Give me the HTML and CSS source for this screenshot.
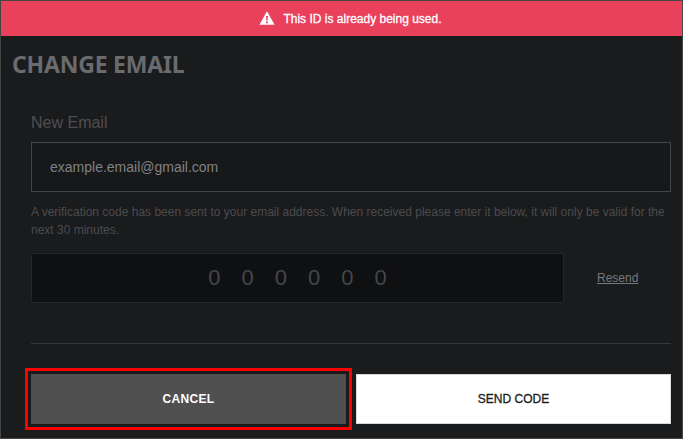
FILE: index.html
```html
<!DOCTYPE html>
<html>
<head>
    <link rel="stylesheet" href="styles.css">
</head>
<body>
    <div class="modal">
        <div class="alert">
            <svg class="alert-icon" viewBox="0 0 16 14" width="16" height="14">
                <path fill="#fff" fill-rule="evenodd" d="M8 0.3 15.6 13.7H0.4ZM7.1 4.9 7.4 9.8H8.6L8.9 4.9ZM7.1 10.6V12.2H8.9V10.6Z"/>
            </svg>
            <span>This ID is already being used.</span>
        </div>

        <h2 class="title">CHANGE EMAIL</h2>

        <div class="form">
            <label class="label">New Email</label>
            <div class="email-field">example.email@gmail.com</div>
            <p class="hint">A verification code has been sent to your email address. When received please enter it below, it will only be valid for the next 30 minutes.</p>

            <div class="code-row">
                <div class="code-field">
                    <span>0</span><span>0</span><span>0</span><span>0</span><span>0</span><span>0</span>
                </div>
                <a class="resend">Resend</a>
            </div>

            <div class="divider"></div>

            <div class="actions">
                <button class="btn btn-cancel">CANCEL</button>
                <button class="btn btn-send">SEND CODE</button>
            </div>
        </div>
    </div>
</body>
</html>
```

FILE: styles.css
```css
html, body {
    margin: 0;
    padding: 0;
}
body {
    width: 683px;
    height: 439px;
    overflow: hidden;
    font-family: "Liberation Sans", Arial, sans-serif;
    background-color: #1a1b1d;
}
.modal {
    box-sizing: border-box;
    width: 683px;
    height: 439px;
    border: 1px solid #444444;
    background-color: #1a1b1d;
}
.alert {
    height: 35px;
    display: flex;
    align-items: center;
    justify-content: center;
    gap: 8px;
    padding-left: 18px;
    background-color: #e9415c;
    color: #ffffff;
    font-size: 12px;
    -webkit-text-stroke: 0.3px #ffffff;
}
.alert-icon {
    display: block;
    margin-top: -1px;
}
.title {
    margin: 13px 0 0 11px;
    height: 30px;
    font-family: "Noto Sans", sans-serif;
    font-size: 23px;
    line-height: 30px;
    letter-spacing: -0.2px;
    font-weight: bold;
    color: #6a6b6f;
}
.form {
    padding: 0 11px 0 30px;
}
.label {
    display: block;
    margin-top: 35px;
    height: 18px;
    font-size: 16px;
    line-height: 18px;
    color: #4e4f52;
}
.email-field {
    box-sizing: border-box;
    height: 50px;
    margin-top: 10px;
    padding-left: 18px;
    border: 1px solid #444548;
    background-color: #17181a;
    color: #808183;
    font-size: 14px;
    line-height: 48px;
}
.hint {
    margin: 11px 0 0;
    font-size: 12px;
    line-height: 18px;
    color: #4a4b4e;
}
.code-row {
    display: flex;
    align-items: center;
    margin-top: 14px;
}
.code-field {
    box-sizing: border-box;
    width: 533px;
    height: 50px;
    display: flex;
    align-items: center;
    justify-content: center;
    gap: 21px;
    border: 1px solid #25262a;
    border-radius: 2px;
    background-color: #0f1012;
    color: #45464a;
    font-size: 22px;
}
.resend {
    margin-left: 33px;
    font-size: 12px;
    color: #77787b;
    text-decoration: underline;
}
.divider {
    height: 1px;
    margin-top: 40px;
    background-color: #353638;
}
.actions {
    display: grid;
    grid-template-columns: 315px 315px;
    gap: 10px;
    margin-top: 30px;
}
.btn {
    box-sizing: border-box;
    height: 50px;
    padding: 0;
    border: 0;
    font-family: "Liberation Sans", Arial, sans-serif;
    font-size: 12px;
}
.btn-cancel {
    background-color: #505050;
    color: #ffffff;
    font-weight: bold;
    letter-spacing: 0.3px;
    outline: 3px solid #ff0000;
    outline-offset: 3px;
}
.btn-send {
    background-color: #ffffff;
    color: #1b1c1e;
    border: 1px solid #d9d9d9;
    -webkit-text-stroke: 0.3px #1b1c1e;
}
```
